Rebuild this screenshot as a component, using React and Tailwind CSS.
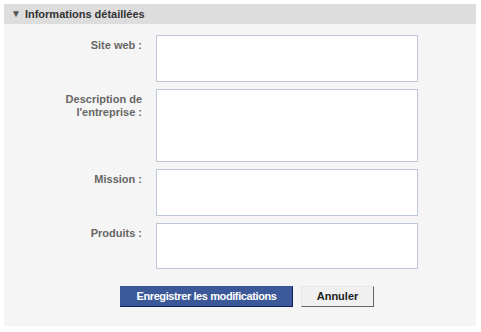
import React from "react";

function Row({ label, h }) {
  return (
    <div className="flex items-start">
      <div className="w-[138px] pt-[4px] text-right text-[11px] leading-[13px] font-bold text-[#666666]">
        {label}
      </div>
      <textarea
        className={`ml-[14px] w-[262px] ${h} resize-none border border-[#bdc7d8] bg-white outline-none`}
      />
    </div>
  );
}

export default function App() {
  return (
    <div
      className="w-[481px] h-[332px] bg-white p-[4px]"
      style={{ fontFamily: '"Liberation Sans", Arial, sans-serif' }}
    >
      <div className="w-[472px] bg-[#f5f5f5]">
        <div className="h-[20px] bg-[#dddddd] flex items-center pl-[7px] text-[11px] font-bold text-[#333333]">
          <span className="text-[10px] text-[#555555] mr-[4px] leading-none">▼</span>
          <span>Informations détaillées</span>
        </div>
        <div className="pt-[11px] pb-[19px] flex flex-col">
          <div className="flex flex-col gap-[7px]">
            <Row label="Site web :" h="h-[47px]" />
            <Row
              label={
                <>
                  Description de
                  <br />
                  l'entreprise :
                </>
              }
              h="h-[73px]"
            />
            <Row label="Mission :" h="h-[47px]" />
            <Row label="Produits :" h="h-[46px]" />
          </div>
          <div className="mt-[17px] ml-[116px] flex gap-[8px]">
            <button className="w-[173px] h-[21px] bg-[#3b5998] border border-[#3b5998] border-b-[#0e1f5b] border-r-[#0e1f5b] text-white text-[11px] font-bold tracking-[-0.4px]">
              Enregistrer les modifications
            </button>
            <button className="w-[73px] h-[21px] bg-[#f0f0f0] border border-[#e7e7e7] border-b-[#666666] border-r-[#666666] text-[#222222] text-[11px] font-bold">
              Annuler
            </button>
          </div>
        </div>
      </div>
    </div>
  );
}
